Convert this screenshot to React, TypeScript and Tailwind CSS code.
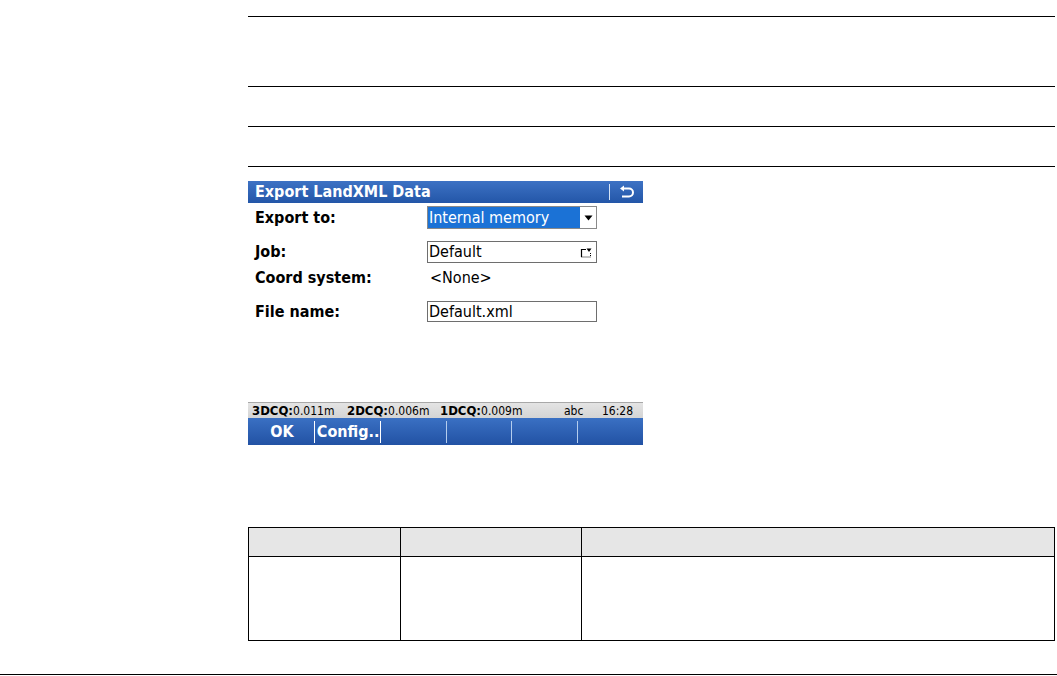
import { ReactElement } from 'react'

const font = { fontFamily: '"DejaVu Sans", Verdana, sans-serif' }

function ReturnIcon() {
  return (
    <svg width="16" height="14" viewBox="0 0 16 14" fill="none">
      <path d="M4 3.5 H10 A4 4 0 0 1 10 11.5 H3" stroke="white" strokeWidth="2" />
      <path d="M1 3.5 L5 0.5 L5 6.5 Z" fill="white" />
    </svg>
  )
}

function DropArrow() {
  return (
    <svg width="9" height="6" viewBox="0 0 9 6">
      <path d="M0.5 0.5 H8.5 L4.5 5.5 Z" fill="black" />
    </svg>
  )
}

function ChooseIcon() {
  return (
    <svg width="12" height="11" viewBox="0 0 12 11" fill="none">
      <path d="M1.5 10 V2.5 H6" stroke="black" strokeWidth="1.2" />
      <path d="M1.5 10 H10.5 V6" stroke="black" strokeWidth="1" strokeDasharray="1 1" />
      <path d="M6.5 1.5 H11.5 L9 5 Z" fill="black" />
    </svg>
  )
}

function Field({ label, children, className }: { label: string; children: ReactElement; className: string }) {
  return (
    <div className={`flex items-center ${className}`}>
      <div className="w-[179px] pl-[7px] text-[16px] font-bold text-black">{label}</div>
      {children}
    </div>
  )
}

function Screen() {
  const keys = ['OK', 'Config..', '', '', '', '']
  return (
    <div className="w-[395px] bg-white font-stretch-condensed" style={font}>
      <div className="flex h-[22px] items-center bg-gradient-to-b from-[#3d72c4] to-[#2356a8] pl-[7px] pr-[8px]">
        <span className="flex-1 text-[16px] font-bold leading-none text-white">Export LandXML Data</span>
        <span className="mr-[9px] h-[16px] w-px bg-[#d6e4f6]" />
        <ReturnIcon />
      </div>

      <Field label="Export to:" className="mt-[3px] h-[23px]">
        <div className="flex h-[23px] w-[170px] border border-[#8a8a8a]">
          <div className="flex flex-1 items-center bg-[#1b72d6] pl-[1px] text-[16px] text-white">Internal memory</div>
          <div className="flex w-[16px] items-center justify-center bg-white">
            <DropArrow />
          </div>
        </div>
      </Field>

      <Field label="Job:" className="mt-[12px] h-[22px]">
        <div className="flex h-[22px] w-[170px] items-center border border-[#6e6e6e] pl-[1px] pr-[4px]">
          <span className="flex-1 text-[16px] text-black">Default</span>
          <ChooseIcon />
        </div>
      </Field>

      <Field label="Coord system:" className="h-[30px]">
        <span className="pl-[3px] text-[16px] text-black">&lt;None&gt;</span>
      </Field>

      <Field label="File name:" className="mt-[8px] h-[21px]">
        <div className="flex h-[21px] w-[170px] items-center border border-[#6e6e6e] pl-[1px] text-[16px] text-black">
          Default.xml
        </div>
      </Field>

      <div className="mt-[80px] flex h-[16px] items-center border-t border-[#a8a8a8] bg-gradient-to-b from-[#e4e4e4] to-[#d4d4d4] text-[12px] leading-none text-black">
        <span className="w-[99px] pl-[4px]">
          <b className="text-[13px]">3DCQ:</b>0.011m
        </span>
        <span className="w-[93px]">
          <b className="text-[13px]">2DCQ:</b>0.006m
        </span>
        <span className="w-[124px]">
          <b className="text-[13px]">1DCQ:</b>0.009m
        </span>
        <span className="w-[38px]">abc</span>
        <span>16:28</span>
      </div>

      <div className="grid h-[27px] grid-cols-6 bg-gradient-to-b from-[#3a70c3] to-[#2252a4]">
        {keys.map((k, i) => (
          <div
            key={i}
            className={`flex items-end pb-[2px] text-[16px] font-bold leading-none text-white ${
              i === 0 ? 'justify-center' : 'pl-0'
            }`}
          >
            <div className="flex h-[22px] w-full items-center">
              {i > 0 && <span className={`mr-[2px] h-[22px] w-px ${i === 1 || i === 2 ? 'bg-white' : 'bg-[#b4cdee]'}`} />}
              <span className={i === 0 ? 'w-full pl-[2px] text-center' : ''}>{k}</span>
            </div>
          </div>
        ))}
      </div>
    </div>
  )
}

export default function App(): ReactElement {
  return (
    <div className="relative h-[676px] w-[1057px] overflow-hidden bg-white">
      <div className="pl-[248px] pr-[2px] pt-[16px]">
        <div className="h-[70px] border-t border-black" />
        <div className="h-[40px] border-t border-black" />
        <div className="h-[41px] border-y border-black" />

        <div className="mt-[14px]">
          <Screen />
        </div>

        <div className="mt-[82px] grid grid-cols-[152px_181px_1fr] border-l border-t border-black">
          <div className="h-[29px] border-b border-r border-black bg-[#e6e6e6]" />
          <div className="h-[29px] border-b border-r border-black bg-[#e6e6e6]" />
          <div className="h-[29px] border-b border-r border-black bg-[#e6e6e6]" />
          <div className="h-[84px] border-b border-r border-black" />
          <div className="h-[84px] border-b border-r border-black" />
          <div className="h-[84px] border-b border-r border-black" />
        </div>
      </div>
      <div className="mt-[33px] border-t border-black" />
    </div>
  )
}
